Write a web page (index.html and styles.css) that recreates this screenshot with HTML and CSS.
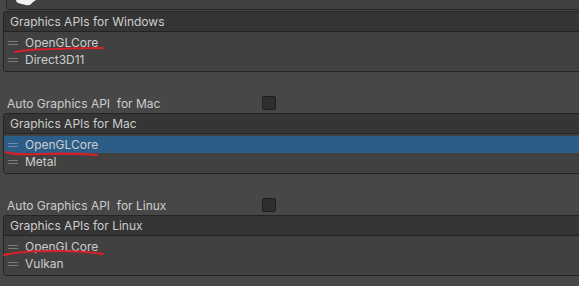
FILE: index.html
```html
<!DOCTYPE html>
<html lang="en">
<head>
    <meta charset="UTF-8">
    <title>Player Settings - Graphics APIs</title>
    <link rel="stylesheet" href="styles.css">
</head>
<body>

<div class="top-box">
    <svg class="top-icon" width="20" height="6" viewBox="0 0 20 6">
        <path d="M0 0 L20 0 Q18 1 16 3 Q14 6 10 5 Q5 4 2 3 Q0 2 0 0 Z" fill="#f2f2f2"/>
    </svg>
</div>

<div class="api-list first">
    <div class="list-header">Graphics APIs for Windows</div>
    <div class="list-body">
        <div class="row"><span class="handle"></span>OpenGLCore</div>
        <div class="row"><span class="handle"></span>Direct3D11</div>
    </div>
</div>

<div class="toggle-row">
    <span class="label">Auto Graphics API  for Mac</span>
    <span class="checkbox"></span>
</div>
<div class="api-list">
    <div class="list-header">Graphics APIs for Mac</div>
    <div class="list-body">
        <div class="row selected"><span class="handle"></span>OpenGLCore</div>
        <div class="row"><span class="handle"></span>Metal</div>
    </div>
</div>

<div class="toggle-row">
    <span class="label">Auto Graphics API  for Linux</span>
    <span class="checkbox"></span>
</div>
<div class="api-list">
    <div class="list-header">Graphics APIs for Linux</div>
    <div class="list-body">
        <div class="row"><span class="handle"></span>OpenGLCore</div>
        <div class="row"><span class="handle"></span>Vulkan</div>
    </div>
</div>

<!-- red marker strokes drawn over the screenshot -->
<svg class="marks" width="579" height="286" viewBox="0 0 579 286">
    <path d="M15 52 Q30 49 55 49 Q85 48 103 48" />
    <path d="M6 152 Q12 155 40 154 Q75 153 97 155" />
    <path d="M4 255 Q20 251 55 251 Q85 251 103 254" />
</svg>

</body>
</html>
```

FILE: styles.css
```css
body {
    margin: 0;
    background-color: #474747;
    color: #cdcdcd;
    font-family: Inter, "Noto Sans", sans-serif;
    font-size: 12px;
    position: relative;
    overflow: hidden;
}
.top-box {
    height: 9px;
    margin-left: 6px;
    background-color: #414141;
    border-left: 1px solid #2a2a2a;
    border-bottom: 1px solid #262626;
    border-bottom-left-radius: 3px;
    position: relative;
}
.top-icon {
    position: absolute;
    left: 9px;
    top: 0;
}
.api-list {
    margin-left: 3px;
    margin-right: -4px;
    border: 1px solid #242424;
    border-radius: 3px;
    overflow: hidden;
}
.api-list.first {
    margin-top: 1px;
}
.list-header {
    height: 19px;
    line-height: 20px;
    padding-left: 6px;
    background-color: #353535;
    border-bottom: 1px solid #242424;
}
.list-body {
    background-color: #414141;
    padding: 2px 0 3px;
}
.row {
    height: 17px;
    line-height: 17px;
    display: flex;
    align-items: center;
}
.row.selected {
    background-color: #2c5d87;
}
.handle {
    width: 10px;
    height: 4px;
    margin: 0 7px 0 4px;
    border-top: 1px solid #7a7a7a;
    border-bottom: 1px solid #7a7a7a;
    box-sizing: border-box;
}
.selected .handle {
    border-color: #6f8aa2;
}
.toggle-row {
    height: 20px;
    margin-top: 21px;
    display: flex;
    align-items: center;
    padding-left: 7px;
}
.label {
    white-space: pre;
    width: 255px;
}
.checkbox {
    width: 12px;
    height: 12px;
    background-color: #2f2f2f;
    border: 1px solid #1e1e1e;
    border-radius: 2px;
}
.marks {
    position: absolute;
    left: 0;
    top: 0;
    pointer-events: none;
}
.marks path {
    fill: none;
    stroke: #d9202a;
    stroke-width: 2.2;
    stroke-linecap: round;
}
```
